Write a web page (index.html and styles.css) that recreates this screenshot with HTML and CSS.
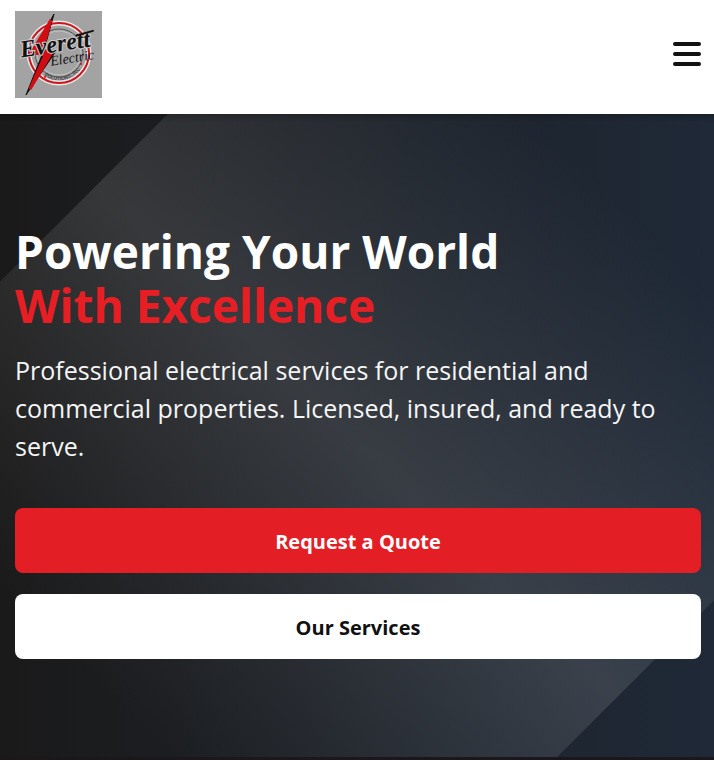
FILE: index.html
```html
<!DOCTYPE html>
<html lang="en">
<head>
<meta charset="utf-8">
<meta name="viewport" content="width=device-width, initial-scale=1">
<title>Everett Electric</title>
<link rel="stylesheet" href="styles.css">
</head>
<body>
<header class="site-header">
  <a class="logo" href="#" aria-label="Everett Electric home">
    <svg viewBox="0 0 87 87" role="img" aria-label="Everett Electric">
      <rect width="87" height="87" fill="#a3a3a3"/>
      <circle cx="44" cy="42" r="30" fill="none" stroke="#e8e8e8" stroke-width="5"/>
      <circle cx="44" cy="42" r="30" fill="none" stroke="#c9151b" stroke-width="2"/>
      <circle cx="44" cy="42" r="24" fill="none" stroke="#555" stroke-width="1"/>
      <circle cx="44" cy="42" r="22" fill="none" stroke="#c4c4c4" stroke-width="1"/>
      <path d="M39 3 17 42l10 2L11 84l30-44-12-1z" fill="#111" stroke="#111" stroke-width="1"/>
      <path d="M36 9 17 41l13 3-15 34 22-37-10-1z" fill="#d20c13" stroke="#d20c13" stroke-width="3"/>
      <path id="ring" d="M29 64Q47 77 66 58" fill="none"/>
      <text class="logo-ring"><textPath href="#ring">SOLUTIONS, INC.</textPath></text>
      <circle cx="30" cy="66" r="1" fill="#d20c13"/>
      <circle cx="66" cy="53" r="1" fill="#d20c13"/>
      <g transform="rotate(-9 40 36)">
        <text class="logo-name logo-halo" x="5" y="41">Everett</text>
        <text class="logo-name" x="5" y="41">Everett</text>
        <path d="M63 28 80 26" fill="none" stroke="#111" stroke-width="2" stroke-linecap="round"/>
        <text class="logo-sub" x="33" y="54">Electric</text>
      </g>
    </svg>
  </a>
  <button class="menu" type="button" aria-label="Open menu"><span></span><span></span><span></span></button>
</header>
<main>
  <section class="hero">
    <div class="hero-content">
      <h1>Powering Your World <span class="accent">With Excellence</span></h1>
      <p>Professional electrical services for residential and commercial properties. Licensed, insured, and ready to serve.</p>
      <div class="actions">
        <a class="btn btn-primary" href="#quote">Request a Quote</a>
        <a class="btn btn-light" href="#services">Our Services</a>
      </div>
    </div>
  </section>
</main>
</body>
</html>
```
FILE: styles.css
```css
* { box-sizing: border-box; }
body {
  margin: 0;
  font-family: "Open Sans", "Noto Sans", sans-serif;
  color: #111;
  background: #1c171b;
}
.site-header {
  display: flex;
  align-items: center;
  justify-content: space-between;
  padding: 11px 13px 16px 15px;
  background: #fff;
}
.logo, .logo svg { display: block; width: 87px; height: 87px; }
.logo-name {
  font: italic bold 24px "Liberation Serif", serif;
  fill: #111;
}
.logo-halo { stroke: #ccc; stroke-width: 2px; }
.logo-sub {
  font: italic 14px "Liberation Serif", serif;
  fill: #111;
}
.logo-ring { font: bold 5px "Liberation Sans", sans-serif; fill: #444; }
.menu {
  display: flex;
  flex-direction: column;
  gap: 6px;
  padding: 0 0 2px;
  border: 0;
  background: none;
  cursor: pointer;
}
.menu span {
  width: 28px;
  height: 4px;
  border-radius: 2px;
  background: #111;
}
.hero {
  position: relative;
  overflow: hidden;
  padding: 110px 13px 98px 15px;
  background: linear-gradient(to right, #1a1a1a, #1f2937);
}
.hero::before {
  content: "";
  position: absolute;
  left: 0;
  top: calc(50% - 360px);
  width: 100%;
  height: 730px;
  transform: rotate(-45deg);
  background: linear-gradient(to right, transparent, rgb(255 255 255 / 12%), transparent);
}
.hero::after {
  content: "";
  position: absolute;
  inset: 0 0 auto;
  height: 8px;
  background: linear-gradient(rgb(0 0 0 / 20%), transparent);
}
.hero-content { position: relative; z-index: 1; }
h1 {
  margin: 0 0 19px;
  font-size: 46px;
  line-height: 54px;
  font-weight: 700;
  color: #fff;
}
.accent { display: block; color: #e81e25; }
p {
  margin: 0 0 43px;
  font-size: 25px;
  line-height: 38px;
  color: #f5f5f5;
}
.actions { display: flex; flex-direction: column; gap: 21px; }
.btn {
  padding: 19px 16px 17px;
  border-radius: 8px;
  font-size: 20px;
  line-height: 29px;
  font-weight: 700;
  text-align: center;
  text-decoration: none;
}
.btn-primary { background: #e41e25; color: #fff; }
.btn-light { background: #fff; color: #111; }
```
